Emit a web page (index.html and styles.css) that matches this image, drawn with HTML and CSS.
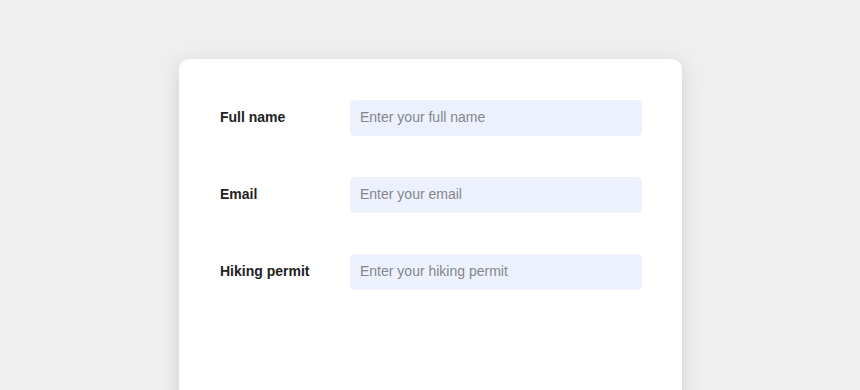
FILE: index.html
```html
<!DOCTYPE html>
<html lang="en">

<head>
  <meta charset="UTF-8">
  <meta name="viewport" content="width=device-width, initial-scale=1.0">
  <title>Hiking Form</title>
  <link rel="stylesheet" href="styles.css">
</head>

<body>
  <!-- Form Card -->
  <div class="card">
    <form class="form">
      <div class="form-row">
        <label for="full-name">Full name</label>
        <input type="text" id="full-name" class="field" placeholder="Enter your full name">
      </div>
      <div class="form-row">
        <label for="email">Email</label>
        <input type="email" id="email" class="field" placeholder="Enter your email">
      </div>
      <div class="form-row">
        <label for="permit">Hiking permit</label>
        <input type="text" id="permit" class="field" placeholder="Enter your hiking permit">
      </div>
    </form>
  </div>
</body>

</html>
```

FILE: styles.css
```css
body {
  font-family: 'Liberation Sans', Arial, sans-serif;
  margin: 0;
  padding-top: 59px;
  background-color: #efefef;
  color: #222;
  overflow: hidden;
}

.card {
  width: 503px;
  min-height: 420px;
  margin-left: calc(50% - 251px);
  box-sizing: border-box;
  padding: 41px 40px 41px 41px;
  background-color: white;
  border-radius: 10px;
  box-shadow: 0 4px 20px rgba(0, 0, 0, 0.12);
}

.form {
  display: flex;
  flex-direction: column;
  gap: 41px;
}

.form-row {
  display: flex;
  align-items: center;
}

.form-row label {
  width: 130px;
  margin-top: -2px;
  font-size: 14px;
  font-weight: bold;
  color: #222;
}

.field {
  width: 292px;
  height: 36px;
  box-sizing: border-box;
  padding: 0 9px 2px;
  font-family: inherit;
  font-size: 14px;
  color: #333;
  background-color: #edf1fd;
  border: 1px solid #edf1fd;
  border-radius: 4px;
  outline: none;
}

.field::placeholder {
  color: #85868c;
}
```
